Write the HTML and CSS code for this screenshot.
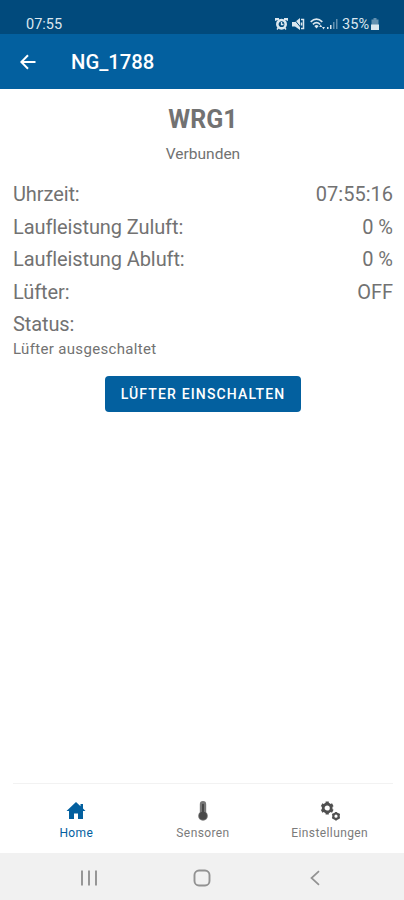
FILE: index.html
```html
<!DOCTYPE html>
<html lang="de">
<head>
<meta charset="utf-8">
<meta name="viewport" content="width=device-width, initial-scale=1">
<title>NG_1788</title>
<link rel="stylesheet" href="styles.css">
</head>
<body>
<div class="statusbar">
  <span class="clock">07:55</span>
  <div class="indicators">
    <svg class="alarm" width="13" height="12" viewBox="0 0 13 12"><path d="M0 0h4v2H2.500L0 3zM9 0h4v3l-2.500-1H9z" fill="currentColor"/><circle cx="6.500" cy="6.200" r="4.200" fill="none" stroke="currentColor" stroke-width="2.600"/><path d="M6.500 4v2.500h2M3.500 9.500L2 11.500M9.500 9.500l1.500 2" fill="none" stroke="currentColor" stroke-width="1.300"/></svg>
    <svg class="mute" width="13" height="12" viewBox="0 0 13 12"><path d="M0 4h3l5-4v12L3 8.500H0z" fill="currentColor"/><path d="M1 0l10 12" stroke="#014a7c" stroke-width="1"/><path d="M9 1.500h2.500v9H9M9.500 4.500v3" fill="none" stroke="currentColor" stroke-width="1.500"/></svg>
    <svg class="wifi" width="16" height="12" viewBox="0 0 16 12"><g fill="none" stroke="currentColor" stroke-width="1.700"><path d="M.7 3.900Q6.500-1.600 12.300 3.900M2.900 6.300Q6.500 3 10.100 6.300"/></g><path d="M4.300 8Q6.500 6.200 8.700 8L6.500 10.500zM9.200 9h3l-1.500-2.500zM12 9h3l-1.500 2.500z" fill="currentColor"/></svg>
    <svg class="signal" width="11" height="12" viewBox="0 0 11 12"><path d="M0 9h1.500v2H0zM3 7h1.500v4H3z" fill="currentColor"/><path d="M6 4h1.500v7H6zM9 1h1.500v10H9z" fill="currentColor" opacity=".45"/></svg>
    <span class="percent">35%</span>
    <svg class="battery" width="8" height="12" viewBox="0 0 8 12"><path d="M2.500 0h3v1.500h2V7H.5V1.500h2z" fill="currentColor" opacity=".45"/><path d="M0 6.500h8V12H0z" fill="currentColor"/></svg>
  </div>
</div>
<header class="appbar">
  <svg width="16" height="16" viewBox="0 0 16 16"><path d="M15.500 8H1.500M8 1.200L1.300 8 8 14.800" fill="none" stroke="currentColor" stroke-width="2"/></svg>
  <h1>NG_1788</h1>
</header>
<main>
  <h2><span>WRG1</span></h2>
  <p class="connection"><span>Verbunden</span></p>
  <dl>
    <div><dt>Uhrzeit:</dt><dd>07:55:16</dd></div>
    <div><dt>Laufleistung Zuluft:</dt><dd>0 %</dd></div>
    <div><dt>Laufleistung Abluft:</dt><dd>0 %</dd></div>
    <div><dt>Lüfter:</dt><dd>OFF</dd></div>
    <div><dt>Status:</dt></div>
  </dl>
  <p class="message"><span>Lüfter ausgeschaltet</span></p>
  <button type="button">LÜFTER EINSCHALTEN</button>
</main>
<nav class="tabs">
  <a class="tab active">
    <svg width="20" height="20" viewBox="0 0 20 20"><path d="M10 1L.5 10H3v8h5v-5.500h4V18h5v-8h2.500L17 7.600V3h-2.500v2.200z" fill="currentColor"/></svg>
    <span>Home</span>
  </a>
  <a class="tab">
    <svg width="20" height="22" viewBox="0 0 20 22"><path d="M6.500 3.500a3.500 3.500 0 0 1 7 0v9a5.300 5.300 0 1 1-7 0z" fill="#777"/><path d="M9 4a1 1 0 0 1 2 0v8H9z" fill="#444"/><circle cx="10" cy="16.200" r="4.300" fill="#484848"/></svg>
    <span>Sensoren</span>
  </a>
  <a class="tab">
    <svg class="gears" width="20" height="20" viewBox="0 0 20 20"><g fill="none" stroke="#505050"><circle cx="7.200" cy="7" r="4" stroke-width="2.800"/><path d="M7.200.5v2.400M7.200 11.100v2.400M1.600 3.750l2.100 1.200M10.700 9.050l2.100 1.200M1.600 10.250l2.100-1.200M10.700 4.950l2.100-1.200" stroke-width="3.200"/><circle cx="16" cy="15.200" r="2.700" stroke-width="2.200"/><path d="M16 10.900v1.400M16 18.100v1.400M12.300 13.100l1.200.7M18.500 16.600l1.200.7M12.300 17.300l1.200-.7M18.500 13.800l1.200-.7" stroke-width="1.800"/></g></svg>
    <span>Einstellungen</span>
  </a>
</nav>
<footer class="sysnav">
  <svg width="18" height="16" viewBox="0 0 18 16"><path d="M2 .5v15M9 .5v15M16 .5v15" stroke="currentColor" stroke-width="1.900"/></svg>
  <svg width="18" height="18" viewBox="0 0 18 18"><rect x="1.500" y="1.500" width="15" height="15" rx="4.500" fill="none" stroke="currentColor" stroke-width="1.900"/></svg>
  <svg width="18" height="16" viewBox="0 0 18 16"><path d="M13 1.200L5.500 8l7.500 6.800" fill="none" stroke="currentColor" stroke-width="1.700"/></svg>
</footer>
</body>
</html>
```
FILE: styles.css
```css
* { box-sizing: border-box; }
body {
  margin: 0;
  height: 900px;
  display: flex;
  flex-direction: column;
  background: #fff;
  color: #727272;
  font-family: Roboto, "Liberation Sans", sans-serif;
  overflow: hidden;
}
svg { display: block; flex: none; }
h1, h2, p, dl, dd { margin: 0; }
.statusbar {
  height: 34px;
  padding: 14px 25px 0 26px;
  display: flex;
  justify-content: space-between;
  background: #014a7c;
  color: #dbe7ef;
  font-size: 14.500px;
  line-height: 20px;
}
.clock, .percent { line-height: 22px; }
.indicators { display: flex; align-items: center; height: 20px; }
.mute { margin-left: 4px; }
.wifi { margin-left: 5px; }
.signal { margin-left: 1px; }
.percent { margin: 2px 0 0 4px; }
.battery { margin-left: 2px; }
.appbar {
  height: 55px;
  padding: 0 20px;
  display: flex;
  align-items: center;
  gap: 35px;
  background: #03609f;
  color: #fff;
}
h1 { font-size: 20.300px; font-weight: 500; line-height: 24px; }
main {
  flex: 1;
  padding: 15px 11px 0 13px;
  display: flex;
  flex-direction: column;
}
h2 { text-align: center; font-size: 25px; font-weight: 700; line-height: 32px; }
.connection { margin-top: 8px; text-align: center; font-size: 15.500px; line-height: 20px; }
dl { margin-top: 14px; font-size: 20px; line-height: 32.600px; }
dt { letter-spacing: -.1px; font-variant-ligatures: common-ligatures; }
dl div { display: flex; justify-content: space-between; }
.message { margin-top: -1px; font-size: 15px; line-height: 18px; letter-spacing: .33px; }
button {
  align-self: center;
  margin-top: 18px;
  width: 196px;
  height: 36px;
  padding: 0;
  border: 0;
  border-radius: 4px;
  background: #03609f;
  color: #fff;
  font: 500 14px/20px Roboto, sans-serif;
  letter-spacing: 1.150px;
}
.tabs {
  height: 70px;
  margin: 0 11px 0 13px;
  border-top: 1px solid #f2f2f2;
  display: flex;
}
.tab {
  flex: 1;
  padding-top: 17px;
  display: flex;
  flex-direction: column;
  align-items: center;
  color: #7b7b7b;
  font-size: 12px;
  line-height: 16px;
  letter-spacing: .4px;
}
.tab svg { height: 20px; margin-bottom: 4px; }
.active { color: #03609f; }
.sysnav {
  height: 47px;
  padding: 2px 80px 0 80px;
  display: flex;
  align-items: center;
  justify-content: space-between;
  background: #f1f1f1;
  color: #929292;
}
```
